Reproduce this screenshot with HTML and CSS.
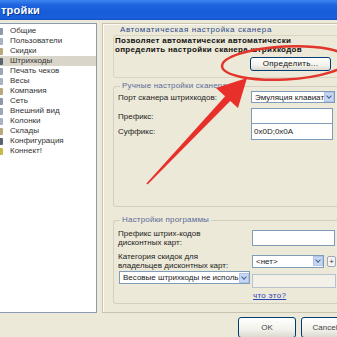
FILE: index.html
```html
<!DOCTYPE html>
<html>
<head>
<meta charset="utf-8">
<link rel="stylesheet" href="styles.css">
</head>
<body>
<div class="window">
  <div class="titlebar">тройки</div>
  <div class="main">
    <div class="tree">
      <div class="item"><span class="ico i1"></span>Общие</div>
      <div class="item"><span class="ico i2"></span>Пользователи</div>
      <div class="item"><span class="ico i3"></span>Скидки</div>
      <div class="item sel"><span class="ico i4"></span>Штрихкоды</div>
      <div class="item"><span class="ico i5"></span>Печать чеков</div>
      <div class="item"><span class="ico i2"></span>Весы</div>
      <div class="item"><span class="ico i3"></span>Компания</div>
      <div class="item"><span class="ico i1"></span>Сеть</div>
      <div class="item"><span class="ico i5"></span>Внешний вид</div>
      <div class="item"><span class="ico i2"></span>Колонки</div>
      <div class="item"><span class="ico i3"></span>Склады</div>
      <div class="item"><span class="ico i4"></span>Конфигурация</div>
      <div class="item"><span class="ico i6"></span>Коннект!</div>
    </div>
    <div class="panel">
      <div class="head">Автоматическая настройка сканера</div>
      <div class="autobox">
        <div class="bold">Позволяет автоматически автоматически<br>определить настройки сканера штрихкодов</div>
        <div class="btnrow"><div class="btn detect">Определить...</div></div>
      </div>
      <div class="group g2">
        <div class="legend">Ручные настройки сканера</div>
        <div class="row r-port">
          <div class="lbl">Порт сканера штрихкодов:</div>
          <div class="select s-port"><span class="val">Эмуляция клавиат</span><span class="arrow"></span></div>
        </div>
        <div class="row r-pre">
          <div class="lbl">Префикс:</div>
          <div class="input i-pre"></div>
        </div>
        <div class="row r-suf">
          <div class="lbl">Суффикс:</div>
          <div class="input i-suf">0x0D;0x0A</div>
        </div>
      </div>
      <div class="group g3">
        <div class="legend">Настройки программы</div>
        <div class="row r-card">
          <div class="lbl two">Префикс штрих-кодов<br>дисконтных карт:</div>
          <div class="input i-card"></div>
        </div>
        <div class="row r-cat">
          <div class="lbl two">Категория скидок для<br>владельцев дисконтных карт:</div>
          <div class="select s-cat"><span class="val">&lt;нет&gt;</span><span class="arrow"></span></div>
          <div class="plus">+</div>
        </div>
        <div class="row r-weight">
          <div class="select s-weight"><span class="val">Весовые штрихкоды не исполь</span><span class="arrow"></span></div>
          <div class="input i-weight"></div>
        </div>
        <div class="row r-link"><a class="link">что это?</a></div>
      </div>
    </div>
  </div>
  <div class="buttons">
    <div class="btn ok">OK</div>
    <div class="btn cancel">Cancel</div>
  </div>
  <svg class="annot" width="337" height="337" viewBox="0 0 337 337">
    <ellipse cx="285" cy="63" rx="63" ry="16.5" transform="rotate(-3 285 63)" fill="none" stroke="#e2352b" stroke-width="2.5"/>
    <polygon points="146.4,183.6 147.6,184.4 232.2,98.9 227.2,94.1" fill="#e8302a"/>
    <polygon points="247,78 238,108 216,88" fill="#e8302a"/>
  </svg>
</div>
</body>
</html>
```

FILE: styles.css
```css
* { box-sizing: border-box; }
html, body { margin: 0; padding: 0; }
body {
  width: 337px;
  height: 337px;
  overflow: hidden;
  background: #ECE9D8;
  font-family: "Liberation Sans", Arial, sans-serif;
  font-size: 8px;
  color: #222;
}
.window { position: relative; width: 337px; height: 337px; overflow: hidden; }
.titlebar {
  height: 20px;
  background: linear-gradient(#3a86f0 0%, #1e63de 25%, #165bd8 60%, #1a5fdc 90%, #0f4fc8 100%);
  color: #fff;
  font-weight: bold;
  font-size: 11px;
  line-height: 20px;
  padding-left: 1px;
  letter-spacing: 0.2px;
  text-shadow: 1px 1px 0 #0a3a9a;
}
.main { display: flex; margin-top: 3px; gap: 5px; height: 290px; }
.tree {
  width: 97px;
  flex: none;
  background: #fff;
  border: 1px solid #8b9bb2;
  border-left: none;
  padding-top: 2px;
  overflow: hidden;
}
.item {
  height: 10px;
  line-height: 10px;
  display: flex;
  align-items: center;
  color: #333;
  white-space: nowrap;
}
.item.sel { background: #d9d6c9; }
.ico {
  width: 6px;
  height: 7px;
  margin-left: -3px;
  margin-right: 7px;
  flex: none;
  border-radius: 1px;
}
.i1 { background: #8c9aa8; }
.i2 { background: #a7b3c0; }
.i3 { background: #b9a87a; }
.i4 { background: #5a6470; }
.i5 { background: #9aa6b5; }
.i6 { background: #c9b64a; }
.panel {
  width: 250px;
  flex: none;
  border: 1px solid #c8c4b0;
  border-right: none;
  box-shadow: inset 1px 1px 0 #fbfaf4;
  padding: 1px 0 0 10px;
}
.head {
  margin-left: 7px;
  height: 10px;
  line-height: 10px;
  color: #2a4a8c;
  letter-spacing: 0.6px;
  white-space: nowrap;
}
.autobox {
  height: 43px;
  border: 1px solid #d8d5c4;
  border-radius: 3px;
  padding: 0 0 0 1px;
}
.bold {
  font-weight: bold;
  line-height: 9px;
  color: #111;
  letter-spacing: 0.3px;
  white-space: nowrap;
}
.btnrow { display: flex; margin-top: 3px; padding-left: 135px; }
.btn {
  border: 1px solid #003c74;
  border-radius: 3px;
  background: linear-gradient(#ffffff, #f3f2ec 60%, #dcdad0);
  text-align: center;
  color: #111;
}
.detect { width: 81px; height: 14px; line-height: 12px; font-size: 8px; letter-spacing: 0.3px; }
.group {
  border: 1px solid #d3d0bf;
  border-right: none;
  border-radius: 3px 0 0 3px;
  padding-left: 4px;
}
.g2 { margin-top: 8px; height: 121px; }
.g3 { margin-top: 13px; height: 84px; }
.legend {
  margin: -6px 0 0 2px;
  width: fit-content;
  background: #ECE9D8;
  padding: 0 2px;
  height: 10px;
  line-height: 10px;
  color: #5a6c99;
  letter-spacing: 0.2px;
  white-space: nowrap;
}
.row { display: flex; align-items: center; }
.lbl { width: 133px; flex: none; white-space: nowrap; color: #222; }
.lbl.two { line-height: 9px; width: 134px; }
.select {
  display: flex;
  align-items: center;
  background: #fff;
  border: 1px solid #7f9db9;
  height: 12px;
  padding-left: 3px;
  white-space: nowrap;
  overflow: hidden;
}
.select .val { flex: 1; overflow: hidden; }
.arrow {
  width: 10px;
  height: 10px;
  flex: none;
  background: #c6d6f5;
  border: 1px solid #b0c4ea;
  position: relative;
}
.arrow::after {
  content: "";
  position: absolute;
  left: 2px;
  top: 1px;
  width: 3px;
  height: 3px;
  border-right: 1.5px solid #4d6185;
  border-bottom: 1.5px solid #4d6185;
  transform: rotate(45deg);
}
.input {
  background: #fff;
  border: 1px solid #7f9db9;
  padding-left: 2px;
  white-space: nowrap;
}
.r-port { margin-top: 0px; height: 12px; }
.s-port { width: 84px; }
.r-pre { margin-top: 5px; height: 16px; }
.i-pre { width: 82px; height: 16px; }
.r-suf { margin-top: -1px; height: 17px; }
.i-suf { width: 82px; height: 17px; line-height: 15px; }
.r-card { margin-top: 4px; height: 18px; }
.i-card { width: 83px; height: 16px; }
.r-cat { margin-top: 5px; height: 18px; }
.s-cat { width: 72px; height: 13px; }
.plus {
  width: 9px;
  height: 11px;
  margin-left: 3px;
  border: 1px solid #9aa8bb;
  background: #f4f3ee;
  font-size: 8px;
  line-height: 9px;
  text-align: center;
  color: #333;
  border-radius: 2px;
}
.r-weight { margin-top: 1px; align-items: flex-start; height: 18px; padding-left: 1px; }
.s-weight { width: 131px; height: 13px; }
.i-weight { width: 84px; height: 14px; margin-left: 2px; margin-top: 3px; background: #f3f1e7; border-color: #b7c2cf; }
.r-link { padding-left: 135px; height: 10px; margin-top: 1px; }
.link { color: #2a44b8; text-decoration: underline; letter-spacing: 0.3px; }
.buttons { display: flex; gap: 5px; padding-left: 238px; margin-top: 4px; }
.ok { width: 58px; height: 21px; line-height: 19px; flex: none; color: #444; }
.cancel { width: 48px; height: 21px; line-height: 19px; flex: none; color: #444; }
.annot { position: absolute; left: 0; top: 0; pointer-events: none; }
```
